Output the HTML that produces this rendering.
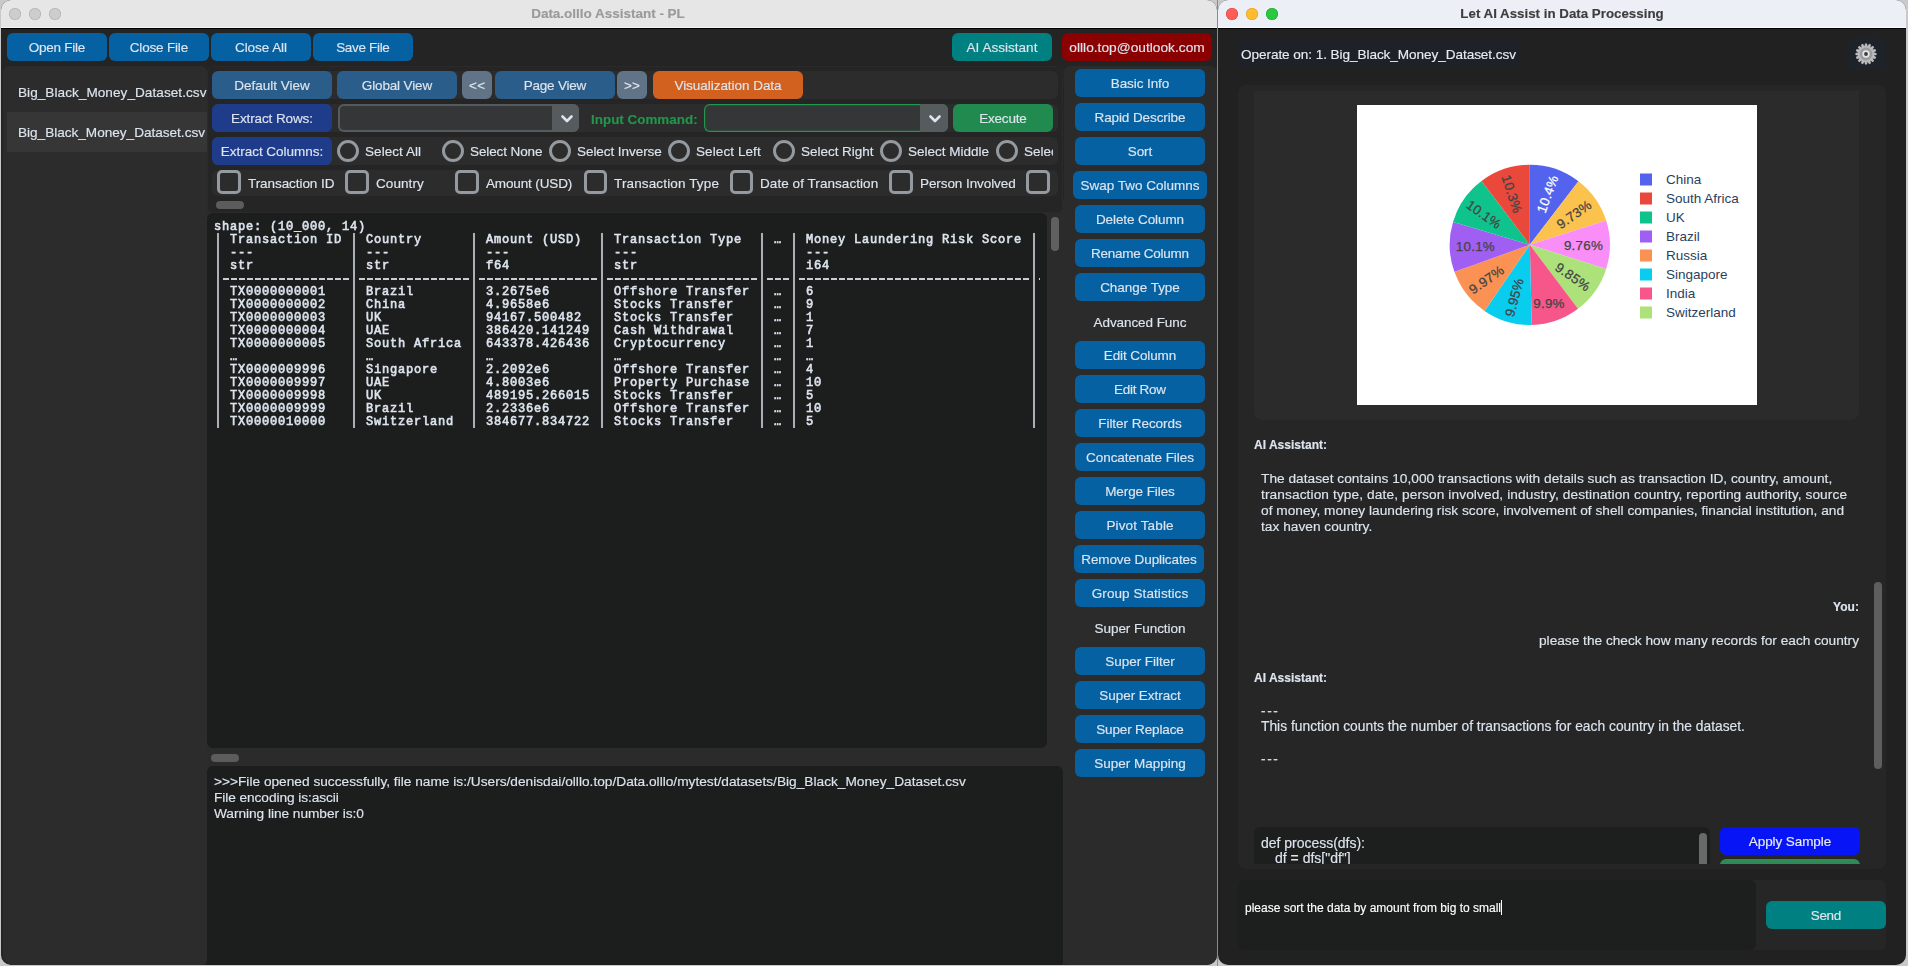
<!DOCTYPE html>
<html><head><meta charset="utf-8"><style>
html,body{margin:0;padding:0;}
body{width:1908px;height:966px;position:relative;overflow:hidden;background:#c9c9c9;font-family:"Liberation Sans",sans-serif;}
body div, body svg{position:absolute;white-space:pre;}
body{-webkit-font-smoothing:antialiased;}
.g{will-change:transform;}
</style></head><body>
<div style="left:1px;top:0;width:1216px;height:965px;background:#242424;border-radius:10px;overflow:hidden">
<div style="left:0px;top:0px;width:1216px;height:28px;background:#e6e6e6;border-radius:0px;"></div>
<div style="left:0px;top:27px;width:1216px;height:1px;background:#f4f4f4;border-radius:0px;"></div>
<div style="left:0px;top:28px;width:1216px;height:1px;background:#000;border-radius:0px;"></div>
<div style="left:8px;top:8px;width:12px;height:12px;background:#cdcdcd;border-radius:6px;box-shadow:inset 0 0 0 0.8px #b4b4b4"></div>
<div style="left:28px;top:8px;width:12px;height:12px;background:#cdcdcd;border-radius:6px;box-shadow:inset 0 0 0 0.8px #b4b4b4"></div>
<div style="left:48px;top:8px;width:12px;height:12px;background:#cdcdcd;border-radius:6px;box-shadow:inset 0 0 0 0.8px #b4b4b4"></div>
<div class="g" style="left:207px;top:4.4px;width:800px;height:20px;line-height:20px;text-align:center;font-family:'Liberation Sans';font-size:13.5px;font-weight:700;color:#9a9a9a;-webkit-text-stroke:0.15px #9a9a9a;"><span style="letter-spacing:-0.014px;margin-right:0.014px">Data.olllo Assistant - PL</span></div>
</div>
<div style="left:7px;top:33px;width:100px;height:28px;background:#0561a2;border-radius:6px;"></div>
<div class="g" style="left:-343.0px;top:38.2px;width:800px;height:20px;line-height:20px;text-align:center;font-family:'Liberation Sans';font-size:13.5px;font-weight:400;color:#dce4ee;-webkit-text-stroke:0.15px #dce4ee;"><span style="letter-spacing:-0.241px;margin-right:0.241px">Open File</span></div>
<div style="left:109px;top:33px;width:100px;height:28px;background:#0561a2;border-radius:6px;"></div>
<div class="g" style="left:-241.0px;top:38.2px;width:800px;height:20px;line-height:20px;text-align:center;font-family:'Liberation Sans';font-size:13.5px;font-weight:400;color:#dce4ee;-webkit-text-stroke:0.15px #dce4ee;"><span style="letter-spacing:-0.181px;margin-right:0.181px">Close File</span></div>
<div style="left:211px;top:33px;width:100px;height:28px;background:#0561a2;border-radius:6px;"></div>
<div class="g" style="left:-139.0px;top:38.2px;width:800px;height:20px;line-height:20px;text-align:center;font-family:'Liberation Sans';font-size:13.5px;font-weight:400;color:#dce4ee;-webkit-text-stroke:0.15px #dce4ee;"><span style="letter-spacing:-0.054px;margin-right:0.054px">Close All</span></div>
<div style="left:313px;top:33px;width:100px;height:28px;background:#0561a2;border-radius:6px;"></div>
<div class="g" style="left:-37.0px;top:38.2px;width:800px;height:20px;line-height:20px;text-align:center;font-family:'Liberation Sans';font-size:13.5px;font-weight:400;color:#dce4ee;-webkit-text-stroke:0.15px #dce4ee;"><span style="letter-spacing:-0.335px;margin-right:0.335px">Save File</span></div>
<div style="left:952px;top:33px;width:100px;height:28px;background:#008080;border-radius:6px;"></div>
<div class="g" style="left:602.0px;top:38.2px;width:800px;height:20px;line-height:20px;text-align:center;font-family:'Liberation Sans';font-size:13.5px;font-weight:400;color:#dce4ee;-webkit-text-stroke:0.15px #dce4ee;"><span style="letter-spacing:0.023px;margin-right:-0.023px">AI Assistant</span></div>
<div style="left:1062px;top:33px;width:150px;height:28px;background:#8b0000;border-radius:6px;"></div>
<div class="g" style="left:737.0px;top:38.2px;width:800px;height:20px;line-height:20px;text-align:center;font-family:'Liberation Sans';font-size:13.7px;font-weight:400;color:#dce4ee;-webkit-text-stroke:0.15px #dce4ee;"><span style="letter-spacing:0.026px;margin-right:-0.026px">olllo.top@outlook.com</span></div>
<div style="left:3px;top:66px;width:204px;height:899px;background:#2c2c2c;border-radius:6px;border-bottom-left-radius:10px"></div>
<div class="g" style="left:18px;top:83.2px;width:188.6px;overflow:hidden;height:20px;line-height:20px;font-family:'Liberation Sans';font-size:13.6px;font-weight:400;color:#dce4ee;-webkit-text-stroke:0.15px #dce4ee;"><span style="letter-spacing:0.040px;margin-right:-0.040px">Big_Black_Money_Dataset.csv(</span></div>
<div style="left:7px;top:112px;width:200px;height:40px;background:#363636;border-radius:0px;"></div>
<div class="g" style="left:18px;top:123.19999999999999px;width:188px;overflow:hidden;height:20px;line-height:20px;font-family:'Liberation Sans';font-size:13.6px;font-weight:400;color:#dce4ee;-webkit-text-stroke:0.15px #dce4ee;"><span style="letter-spacing:-0.015px;margin-right:0.015px">Big_Black_Money_Dataset.csv</span></div>
<div style="left:207px;top:200px;width:858px;height:765px;background:#2b2b2b;border-radius:0px;"></div>
<div style="left:207px;top:66px;width:855.5px;height:147px;background:#252525;border-radius:6px;box-shadow:inset 0 0 0 1px #2a2a2a"></div>
<div style="left:212px;top:71px;width:845.5px;height:28px;background:#2c2c2c;border-radius:6px;"></div>
<div style="left:212px;top:104px;width:845.5px;height:28px;background:#2c2c2c;border-radius:6px;"></div>
<div style="left:212px;top:137px;width:845.5px;height:27.5px;background:#2c2c2c;border-radius:6px;"></div>
<div style="left:212px;top:169.5px;width:845.5px;height:26.5px;background:#2c2c2c;border-radius:6px;"></div>
<div style="left:212px;top:71px;width:120px;height:28px;background:#2a5d89;border-radius:6px;"></div>
<div class="g" style="left:-128.0px;top:76.2px;width:800px;height:20px;line-height:20px;text-align:center;font-family:'Liberation Sans';font-size:13.5px;font-weight:400;color:#dce4ee;-webkit-text-stroke:0.15px #dce4ee;"><span style="letter-spacing:-0.004px;margin-right:0.004px">Default View</span></div>
<div style="left:337px;top:71px;width:120px;height:28px;background:#2a5d89;border-radius:6px;"></div>
<div class="g" style="left:-3.0px;top:76.2px;width:800px;height:20px;line-height:20px;text-align:center;font-family:'Liberation Sans';font-size:13.5px;font-weight:400;color:#dce4ee;-webkit-text-stroke:0.15px #dce4ee;"><span style="letter-spacing:-0.140px;margin-right:0.140px">Global View</span></div>
<div style="left:462px;top:71px;width:30px;height:28px;background:#617386;border-radius:6px;"></div>
<div class="g" style="left:77.0px;top:76.2px;width:800px;height:20px;line-height:20px;text-align:center;font-family:'Liberation Sans';font-size:13.5px;font-weight:400;color:#dce4ee;-webkit-text-stroke:0.15px #dce4ee;"><span style="letter-spacing:0.319px;margin-right:-0.319px">&lt;&lt;</span></div>
<div style="left:495px;top:71px;width:120px;height:28px;background:#2a5d89;border-radius:6px;"></div>
<div class="g" style="left:155.0px;top:76.2px;width:800px;height:20px;line-height:20px;text-align:center;font-family:'Liberation Sans';font-size:13.5px;font-weight:400;color:#dce4ee;-webkit-text-stroke:0.15px #dce4ee;"><span style="letter-spacing:-0.237px;margin-right:0.237px">Page View</span></div>
<div style="left:617px;top:71px;width:30px;height:28px;background:#617386;border-radius:6px;"></div>
<div class="g" style="left:232.0px;top:76.2px;width:800px;height:20px;line-height:20px;text-align:center;font-family:'Liberation Sans';font-size:13.5px;font-weight:400;color:#dce4ee;-webkit-text-stroke:0.15px #dce4ee;"><span style="letter-spacing:0.019px;margin-right:-0.019px">&gt;&gt;</span></div>
<div style="left:653px;top:71px;width:150px;height:28px;background:#d2601f;border-radius:6px;"></div>
<div class="g" style="left:328.0px;top:76.2px;width:800px;height:20px;line-height:20px;text-align:center;font-family:'Liberation Sans';font-size:13.5px;font-weight:400;color:#dce4ee;-webkit-text-stroke:0.15px #dce4ee;"><span style="letter-spacing:-0.037px;margin-right:0.037px">Visualization Data</span></div>
<div style="left:212px;top:104px;width:120px;height:28px;background:#1f3c8a;border-radius:6px;"></div>
<div class="g" style="left:-128.0px;top:109.2px;width:800px;height:20px;line-height:20px;text-align:center;font-family:'Liberation Sans';font-size:13.5px;font-weight:400;color:#dce4ee;-webkit-text-stroke:0.15px #dce4ee;"><span style="letter-spacing:-0.107px;margin-right:0.107px">Extract Rows:</span></div>
<div style="left:338px;top:104px;width:241px;height:28px;background:#343638;border-radius:6px;box-shadow:inset 0 0 0 2px #565b5e"></div>
<div style="left:552px;top:104px;width:27px;height:28px;background:#565b5e;border-radius:0px;border-radius:0 6px 6px 0"></div>
<svg style="left:559.8px;top:112.9px;width:14px;height:12px" viewBox="0 0 14 12"><path d="M2.5 3.5 L7 8 L11.5 3.5" stroke="#dce4ee" stroke-width="2.6" fill="none" stroke-linecap="round" stroke-linejoin="round"/></svg>
<div class="g" style="left:591px;top:110.2px;height:20px;line-height:20px;font-family:'Liberation Sans';font-size:13.4px;font-weight:700;color:#22964c;-webkit-text-stroke:0.15px #22964c;"><span style="letter-spacing:0.017px;margin-right:-0.017px">Input Command:</span></div>
<div style="left:704px;top:104px;width:244px;height:28px;background:#343638;border-radius:6px;box-shadow:inset 0 0 0 1.2px #22964c"></div>
<div style="left:920px;top:104px;width:28px;height:28px;background:#565b5e;border-radius:0px;border-radius:0 6px 6px 0"></div>
<svg style="left:927.8px;top:112.9px;width:14px;height:12px" viewBox="0 0 14 12"><path d="M2.5 3.5 L7 8 L11.5 3.5" stroke="#dce4ee" stroke-width="2.6" fill="none" stroke-linecap="round" stroke-linejoin="round"/></svg>
<div style="left:953px;top:104px;width:100px;height:28px;background:#218a4f;border-radius:6px;"></div>
<div class="g" style="left:603.0px;top:109.2px;width:800px;height:20px;line-height:20px;text-align:center;font-family:'Liberation Sans';font-size:13.5px;font-weight:400;color:#dce4ee;-webkit-text-stroke:0.15px #dce4ee;"><span style="letter-spacing:-0.180px;margin-right:0.180px">Execute</span></div>
<div style="left:212px;top:137px;width:120px;height:28px;background:#1f3c8a;border-radius:6px;"></div>
<div class="g" style="left:-128.0px;top:142.2px;width:800px;height:20px;line-height:20px;text-align:center;font-family:'Liberation Sans';font-size:13.5px;font-weight:400;color:#dce4ee;-webkit-text-stroke:0.15px #dce4ee;"><span style="letter-spacing:-0.025px;margin-right:0.025px">Extract Columns:</span></div>
<div style="left:212px;top:137px;width:841px;height:28px;overflow:hidden">
<div style="left:125px;top:3px;width:22px;height:22px;background:transparent;border-radius:11px;box-sizing:border-box;border:3px solid #949a9f"></div>
<div class="g" style="left:153px;top:5.199999999999999px;height:20px;line-height:20px;font-family:'Liberation Sans';font-size:13.5px;font-weight:400;color:#dce4ee;-webkit-text-stroke:0.15px #dce4ee;"><span style="letter-spacing:0.063px;margin-right:-0.063px">Select All</span></div>
<div style="left:230px;top:3px;width:22px;height:22px;background:transparent;border-radius:11px;box-sizing:border-box;border:3px solid #949a9f"></div>
<div class="g" style="left:258px;top:5.199999999999999px;height:20px;line-height:20px;font-family:'Liberation Sans';font-size:13.5px;font-weight:400;color:#dce4ee;-webkit-text-stroke:0.15px #dce4ee;"><span style="letter-spacing:-0.105px;margin-right:0.105px">Select None</span></div>
<div style="left:337px;top:3px;width:22px;height:22px;background:transparent;border-radius:11px;box-sizing:border-box;border:3px solid #949a9f"></div>
<div class="g" style="left:365px;top:5.199999999999999px;height:20px;line-height:20px;font-family:'Liberation Sans';font-size:13.5px;font-weight:400;color:#dce4ee;-webkit-text-stroke:0.15px #dce4ee;"><span style="letter-spacing:-0.057px;margin-right:0.057px">Select Inverse</span></div>
<div style="left:456px;top:3px;width:22px;height:22px;background:transparent;border-radius:11px;box-sizing:border-box;border:3px solid #949a9f"></div>
<div class="g" style="left:484px;top:5.199999999999999px;height:20px;line-height:20px;font-family:'Liberation Sans';font-size:13.5px;font-weight:400;color:#dce4ee;-webkit-text-stroke:0.15px #dce4ee;"><span style="letter-spacing:0.090px;margin-right:-0.090px">Select Left</span></div>
<div style="left:561px;top:3px;width:22px;height:22px;background:transparent;border-radius:11px;box-sizing:border-box;border:3px solid #949a9f"></div>
<div class="g" style="left:589px;top:5.199999999999999px;height:20px;line-height:20px;font-family:'Liberation Sans';font-size:13.5px;font-weight:400;color:#dce4ee;-webkit-text-stroke:0.15px #dce4ee;"><span style="letter-spacing:-0.027px;margin-right:0.027px">Select Right</span></div>
<div style="left:668px;top:3px;width:22px;height:22px;background:transparent;border-radius:11px;box-sizing:border-box;border:3px solid #949a9f"></div>
<div class="g" style="left:696px;top:5.199999999999999px;height:20px;line-height:20px;font-family:'Liberation Sans';font-size:13.5px;font-weight:400;color:#dce4ee;-webkit-text-stroke:0.15px #dce4ee;"><span style="letter-spacing:0.004px;margin-right:-0.004px">Select Middle</span></div>
<div style="left:784px;top:3px;width:22px;height:22px;background:transparent;border-radius:11px;box-sizing:border-box;border:3px solid #949a9f"></div>
<div class="g" style="left:812px;top:5.199999999999999px;height:20px;line-height:20px;font-family:'Liberation Sans';font-size:13.5px;font-weight:400;color:#dce4ee;-webkit-text-stroke:0.15px #dce4ee;">Select Invert</div>
</div>
<div style="left:217.1px;top:170.2px;width:23.6px;height:23.6px;background:transparent;border-radius:5px;box-sizing:border-box;border:3px solid #949a9f"></div>
<div class="g" style="left:247.6px;top:174.2px;height:20px;line-height:20px;font-family:'Liberation Sans';font-size:13.5px;font-weight:400;color:#dce4ee;-webkit-text-stroke:0.15px #dce4ee;"><span style="letter-spacing:-0.069px;margin-right:0.069px">Transaction ID</span></div>
<div style="left:345.1px;top:170.2px;width:23.6px;height:23.6px;background:transparent;border-radius:5px;box-sizing:border-box;border:3px solid #949a9f"></div>
<div class="g" style="left:375.6px;top:174.2px;height:20px;line-height:20px;font-family:'Liberation Sans';font-size:13.5px;font-weight:400;color:#dce4ee;-webkit-text-stroke:0.15px #dce4ee;"><span style="letter-spacing:0.086px;margin-right:-0.086px">Country</span></div>
<div style="left:455.3px;top:170.2px;width:23.6px;height:23.6px;background:transparent;border-radius:5px;box-sizing:border-box;border:3px solid #949a9f"></div>
<div class="g" style="left:485.8px;top:174.2px;height:20px;line-height:20px;font-family:'Liberation Sans';font-size:13.5px;font-weight:400;color:#dce4ee;-webkit-text-stroke:0.15px #dce4ee;"><span style="letter-spacing:-0.135px;margin-right:0.135px">Amount (USD)</span></div>
<div style="left:583.6px;top:170.2px;width:23.6px;height:23.6px;background:transparent;border-radius:5px;box-sizing:border-box;border:3px solid #949a9f"></div>
<div class="g" style="left:614.1px;top:174.2px;height:20px;line-height:20px;font-family:'Liberation Sans';font-size:13.5px;font-weight:400;color:#dce4ee;-webkit-text-stroke:0.15px #dce4ee;"><span style="letter-spacing:0.139px;margin-right:-0.139px">Transaction Type</span></div>
<div style="left:729.6px;top:170.2px;width:23.6px;height:23.6px;background:transparent;border-radius:5px;box-sizing:border-box;border:3px solid #949a9f"></div>
<div class="g" style="left:760.1px;top:174.2px;height:20px;line-height:20px;font-family:'Liberation Sans';font-size:13.5px;font-weight:400;color:#dce4ee;-webkit-text-stroke:0.15px #dce4ee;"><span style="letter-spacing:0.062px;margin-right:-0.062px">Date of Transaction</span></div>
<div style="left:889.3px;top:170.2px;width:23.6px;height:23.6px;background:transparent;border-radius:5px;box-sizing:border-box;border:3px solid #949a9f"></div>
<div class="g" style="left:919.8px;top:174.2px;height:20px;line-height:20px;font-family:'Liberation Sans';font-size:13.5px;font-weight:400;color:#dce4ee;-webkit-text-stroke:0.15px #dce4ee;"><span style="letter-spacing:-0.079px;margin-right:0.079px">Person Involved</span></div>
<div style="left:1026.3px;top:170.2px;width:23.6px;height:23.6px;background:transparent;border-radius:5px;box-sizing:border-box;border:3px solid #949a9f"></div>
<div style="left:216px;top:201px;width:28px;height:8px;background:#5c5c5c;border-radius:4px;"></div>
<div style="left:207px;top:213px;width:840px;height:535px;background:#1c1d1d;border-radius:6px;"></div>
<div style="left:1051px;top:217px;width:8px;height:34px;background:#606060;border-radius:4px;"></div>
<div style="left:207px;top:213px;width:833px;height:535px;overflow:hidden">
<div class="g" style="left:7.400000000000006px;top:8.400000000000006px;height:13px;line-height:13px;font-family:'Liberation Mono';font-size:12px;letter-spacing:0.8px;font-weight:400;-webkit-text-stroke:0.6px #dce4ee;color:#dce4ee;white-space:pre">shape: (10_000, 14)</div>
<div class="g" style="left:7.400000000000006px;top:21.400000000000006px;height:13px;line-height:13px;font-family:'Liberation Mono';font-size:12px;letter-spacing:0.8px;font-weight:400;-webkit-text-stroke:0.6px #dce4ee;color:#dce4ee;white-space:pre">  Transaction ID   Country        Amount (USD)    Transaction Type    …   Money Laundering Risk Score</div>
<div class="g" style="left:7.400000000000006px;top:34.400000000000006px;height:13px;line-height:13px;font-family:'Liberation Mono';font-size:12px;letter-spacing:0.8px;font-weight:400;-webkit-text-stroke:0.6px #dce4ee;color:#dce4ee;white-space:pre">  ---              ---            ---             ---                     ---</div>
<div class="g" style="left:7.400000000000006px;top:47.39999999999998px;height:13px;line-height:13px;font-family:'Liberation Mono';font-size:12px;letter-spacing:0.8px;font-weight:400;-webkit-text-stroke:0.6px #dce4ee;color:#dce4ee;white-space:pre">  str              str            f64             str                     i64</div>
<div style="left:16px;top:65.44999999999999px;width:128px;height:1.5px;background:repeating-linear-gradient(90deg,#c9ced4 0 6.3px,transparent 6.3px 8px)"></div>
<div style="left:152px;top:65.44999999999999px;width:112px;height:1.5px;background:repeating-linear-gradient(90deg,#c9ced4 0 6.3px,transparent 6.3px 8px)"></div>
<div style="left:272px;top:65.44999999999999px;width:120px;height:1.5px;background:repeating-linear-gradient(90deg,#c9ced4 0 6.3px,transparent 6.3px 8px)"></div>
<div style="left:400px;top:65.44999999999999px;width:152px;height:1.5px;background:repeating-linear-gradient(90deg,#c9ced4 0 6.3px,transparent 6.3px 8px)"></div>
<div style="left:560px;top:65.44999999999999px;width:24px;height:1.5px;background:repeating-linear-gradient(90deg,#c9ced4 0 6.3px,transparent 6.3px 8px)"></div>
<div style="left:592px;top:65.44999999999999px;width:232px;height:1.5px;background:repeating-linear-gradient(90deg,#c9ced4 0 6.3px,transparent 6.3px 8px)"></div>
<div style="left:832px;top:65.44999999999999px;width:16px;height:1.5px;background:repeating-linear-gradient(90deg,#c9ced4 0 6.3px,transparent 6.3px 8px)"></div>
<div class="g" style="left:7.400000000000006px;top:73.39999999999998px;height:13px;line-height:13px;font-family:'Liberation Mono';font-size:12px;letter-spacing:0.8px;font-weight:400;-webkit-text-stroke:0.6px #dce4ee;color:#dce4ee;white-space:pre">  TX0000000001     Brazil         3.2675e6        Offshore Transfer   …   6</div>
<div class="g" style="left:7.400000000000006px;top:86.39999999999998px;height:13px;line-height:13px;font-family:'Liberation Mono';font-size:12px;letter-spacing:0.8px;font-weight:400;-webkit-text-stroke:0.6px #dce4ee;color:#dce4ee;white-space:pre">  TX0000000002     China          4.9658e6        Stocks Transfer     …   9</div>
<div class="g" style="left:7.400000000000006px;top:99.39999999999998px;height:13px;line-height:13px;font-family:'Liberation Mono';font-size:12px;letter-spacing:0.8px;font-weight:400;-webkit-text-stroke:0.6px #dce4ee;color:#dce4ee;white-space:pre">  TX0000000003     UK             94167.500482    Stocks Transfer     …   1</div>
<div class="g" style="left:7.400000000000006px;top:112.39999999999998px;height:13px;line-height:13px;font-family:'Liberation Mono';font-size:12px;letter-spacing:0.8px;font-weight:400;-webkit-text-stroke:0.6px #dce4ee;color:#dce4ee;white-space:pre">  TX0000000004     UAE            386420.141249   Cash Withdrawal     …   7</div>
<div class="g" style="left:7.400000000000006px;top:125.39999999999998px;height:13px;line-height:13px;font-family:'Liberation Mono';font-size:12px;letter-spacing:0.8px;font-weight:400;-webkit-text-stroke:0.6px #dce4ee;color:#dce4ee;white-space:pre">  TX0000000005     South Africa   643378.426436   Cryptocurrency      …   1</div>
<div class="g" style="left:7.400000000000006px;top:138.39999999999998px;height:13px;line-height:13px;font-family:'Liberation Mono';font-size:12px;letter-spacing:0.8px;font-weight:400;-webkit-text-stroke:0.6px #dce4ee;color:#dce4ee;white-space:pre">  …                …              …               …                   …   …</div>
<div class="g" style="left:7.400000000000006px;top:151.39999999999998px;height:13px;line-height:13px;font-family:'Liberation Mono';font-size:12px;letter-spacing:0.8px;font-weight:400;-webkit-text-stroke:0.6px #dce4ee;color:#dce4ee;white-space:pre">  TX0000009996     Singapore      2.2092e6        Offshore Transfer   …   4</div>
<div class="g" style="left:7.400000000000006px;top:164.39999999999998px;height:13px;line-height:13px;font-family:'Liberation Mono';font-size:12px;letter-spacing:0.8px;font-weight:400;-webkit-text-stroke:0.6px #dce4ee;color:#dce4ee;white-space:pre">  TX0000009997     UAE            4.8003e6        Property Purchase   …   10</div>
<div class="g" style="left:7.400000000000006px;top:177.39999999999998px;height:13px;line-height:13px;font-family:'Liberation Mono';font-size:12px;letter-spacing:0.8px;font-weight:400;-webkit-text-stroke:0.6px #dce4ee;color:#dce4ee;white-space:pre">  TX0000009998     UK             489195.266015   Stocks Transfer     …   5</div>
<div class="g" style="left:7.400000000000006px;top:190.39999999999998px;height:13px;line-height:13px;font-family:'Liberation Mono';font-size:12px;letter-spacing:0.8px;font-weight:400;-webkit-text-stroke:0.6px #dce4ee;color:#dce4ee;white-space:pre">  TX0000009999     Brazil         2.2336e6        Offshore Transfer   …   10</div>
<div class="g" style="left:7.400000000000006px;top:203.39999999999998px;height:13px;line-height:13px;font-family:'Liberation Mono';font-size:12px;letter-spacing:0.8px;font-weight:400;-webkit-text-stroke:0.6px #dce4ee;color:#dce4ee;white-space:pre">  TX0000010000     Switzerland    384677.834722   Stocks Transfer     …   5</div>
<div style="left:10.150000000000006px;top:20px;width:1.5px;height:195px;background:#aab0b8"></div>
<div style="left:146.14999999999998px;top:20px;width:1.5px;height:195px;background:#aab0b8"></div>
<div style="left:266.15px;top:20px;width:1.5px;height:195px;background:#aab0b8"></div>
<div style="left:394.15px;top:20px;width:1.5px;height:195px;background:#aab0b8"></div>
<div style="left:554.15px;top:20px;width:1.5px;height:195px;background:#aab0b8"></div>
<div style="left:586.15px;top:20px;width:1.5px;height:195px;background:#aab0b8"></div>
<div style="left:826.1500000000001px;top:20px;width:1.5px;height:195px;background:#aab0b8"></div>
</div>
<div style="left:211px;top:754px;width:28px;height:8px;background:#5c5c5c;border-radius:4px;"></div>
<div style="left:207px;top:766px;width:856px;height:199px;background:#1c1d1d;border-radius:6px;border-bottom-left-radius:0;border-bottom-right-radius:0"></div>
<div class="g" style="left:214px;top:772.2px;height:20px;line-height:20px;font-family:'Liberation Sans';font-size:13.7px;font-weight:400;color:#dce4ee;-webkit-text-stroke:0.15px #dce4ee;"><span style="letter-spacing:0.006px;margin-right:-0.006px">&gt;&gt;&gt;File opened successfully, file name is:/Users/denisdai/olllo.top/Data.olllo/mytest/datasets/Big_Black_Money_Dataset.csv</span></div>
<div class="g" style="left:214px;top:788.2px;height:20px;line-height:20px;font-family:'Liberation Sans';font-size:13.7px;font-weight:400;color:#dce4ee;-webkit-text-stroke:0.15px #dce4ee;"><span style="letter-spacing:-0.071px;margin-right:0.071px">File encoding is:ascii</span></div>
<div class="g" style="left:214px;top:804.2px;height:20px;line-height:20px;font-family:'Liberation Sans';font-size:13.7px;font-weight:400;color:#dce4ee;-webkit-text-stroke:0.15px #dce4ee;"><span style="letter-spacing:-0.039px;margin-right:0.039px">Warning line number is:0</span></div>
<div style="left:1063.5px;top:66px;width:153.5px;height:899px;background:#2b2b2b;border-radius:6px;border-bottom-right-radius:10px"></div>
<div style="left:1075px;top:69px;width:130px;height:28px;background:#0561a2;border-radius:6px;"></div>
<div class="g" style="left:740.0px;top:74.2px;width:800px;height:20px;line-height:20px;text-align:center;font-family:'Liberation Sans';font-size:13.5px;font-weight:400;color:#dce4ee;-webkit-text-stroke:0.15px #dce4ee;"><span style="letter-spacing:-0.076px;margin-right:0.076px">Basic Info</span></div>
<div style="left:1075px;top:103px;width:130px;height:28px;background:#0561a2;border-radius:6px;"></div>
<div class="g" style="left:740.0px;top:108.2px;width:800px;height:20px;line-height:20px;text-align:center;font-family:'Liberation Sans';font-size:13.5px;font-weight:400;color:#dce4ee;-webkit-text-stroke:0.15px #dce4ee;"><span style="letter-spacing:-0.100px;margin-right:0.100px">Rapid Describe</span></div>
<div style="left:1075px;top:137px;width:130px;height:28px;background:#0561a2;border-radius:6px;"></div>
<div class="g" style="left:740.0px;top:142.2px;width:800px;height:20px;line-height:20px;text-align:center;font-family:'Liberation Sans';font-size:13.5px;font-weight:400;color:#dce4ee;-webkit-text-stroke:0.15px #dce4ee;"><span style="letter-spacing:-0.155px;margin-right:0.155px">Sort</span></div>
<div style="left:1073px;top:171px;width:134px;height:28px;background:#0561a2;border-radius:6px;"></div>
<div class="g" style="left:740.0px;top:176.2px;width:800px;height:20px;line-height:20px;text-align:center;font-family:'Liberation Sans';font-size:13.5px;font-weight:400;color:#dce4ee;-webkit-text-stroke:0.15px #dce4ee;"><span style="letter-spacing:-0.018px;margin-right:0.018px">Swap Two Columns</span></div>
<div style="left:1075px;top:205px;width:130px;height:28px;background:#0561a2;border-radius:6px;"></div>
<div class="g" style="left:740.0px;top:210.2px;width:800px;height:20px;line-height:20px;text-align:center;font-family:'Liberation Sans';font-size:13.5px;font-weight:400;color:#dce4ee;-webkit-text-stroke:0.15px #dce4ee;"><span style="letter-spacing:-0.100px;margin-right:0.100px">Delete Column</span></div>
<div style="left:1075px;top:239px;width:130px;height:28px;background:#0561a2;border-radius:6px;"></div>
<div class="g" style="left:740.0px;top:244.2px;width:800px;height:20px;line-height:20px;text-align:center;font-family:'Liberation Sans';font-size:13.5px;font-weight:400;color:#dce4ee;-webkit-text-stroke:0.15px #dce4ee;"><span style="letter-spacing:-0.275px;margin-right:0.275px">Rename Column</span></div>
<div style="left:1075px;top:273px;width:130px;height:28px;background:#0561a2;border-radius:6px;"></div>
<div class="g" style="left:740.0px;top:278.2px;width:800px;height:20px;line-height:20px;text-align:center;font-family:'Liberation Sans';font-size:13.5px;font-weight:400;color:#dce4ee;-webkit-text-stroke:0.15px #dce4ee;"><span style="letter-spacing:-0.038px;margin-right:0.038px">Change Type</span></div>
<div class="g" style="left:740px;top:313.2px;width:800px;height:20px;line-height:20px;text-align:center;font-family:'Liberation Sans';font-size:13.5px;font-weight:400;color:#dce4ee;-webkit-text-stroke:0.15px #dce4ee;"><span style="letter-spacing:-0.084px;margin-right:0.084px">Advanced Func</span></div>
<div style="left:1075px;top:341px;width:130px;height:28px;background:#0561a2;border-radius:6px;"></div>
<div class="g" style="left:740.0px;top:346.2px;width:800px;height:20px;line-height:20px;text-align:center;font-family:'Liberation Sans';font-size:13.5px;font-weight:400;color:#dce4ee;-webkit-text-stroke:0.15px #dce4ee;"><span style="letter-spacing:-0.105px;margin-right:0.105px">Edit Column</span></div>
<div style="left:1075px;top:375px;width:130px;height:28px;background:#0561a2;border-radius:6px;"></div>
<div class="g" style="left:740.0px;top:380.2px;width:800px;height:20px;line-height:20px;text-align:center;font-family:'Liberation Sans';font-size:13.5px;font-weight:400;color:#dce4ee;-webkit-text-stroke:0.15px #dce4ee;"><span style="letter-spacing:-0.262px;margin-right:0.262px">Edit Row</span></div>
<div style="left:1075px;top:409px;width:130px;height:28px;background:#0561a2;border-radius:6px;"></div>
<div class="g" style="left:740.0px;top:414.2px;width:800px;height:20px;line-height:20px;text-align:center;font-family:'Liberation Sans';font-size:13.5px;font-weight:400;color:#dce4ee;-webkit-text-stroke:0.15px #dce4ee;"><span style="letter-spacing:-0.041px;margin-right:0.041px">Filter Records</span></div>
<div style="left:1075px;top:443px;width:130px;height:28px;background:#0561a2;border-radius:6px;"></div>
<div class="g" style="left:740.0px;top:448.2px;width:800px;height:20px;line-height:20px;text-align:center;font-family:'Liberation Sans';font-size:13.5px;font-weight:400;color:#dce4ee;-webkit-text-stroke:0.15px #dce4ee;"><span style="letter-spacing:-0.063px;margin-right:0.063px">Concatenate Files</span></div>
<div style="left:1075px;top:477px;width:130px;height:28px;background:#0561a2;border-radius:6px;"></div>
<div class="g" style="left:740.0px;top:482.2px;width:800px;height:20px;line-height:20px;text-align:center;font-family:'Liberation Sans';font-size:13.5px;font-weight:400;color:#dce4ee;-webkit-text-stroke:0.15px #dce4ee;"><span style="letter-spacing:-0.093px;margin-right:0.093px">Merge Files</span></div>
<div style="left:1075px;top:511px;width:130px;height:28px;background:#0561a2;border-radius:6px;"></div>
<div class="g" style="left:740.0px;top:516.2px;width:800px;height:20px;line-height:20px;text-align:center;font-family:'Liberation Sans';font-size:13.5px;font-weight:400;color:#dce4ee;-webkit-text-stroke:0.15px #dce4ee;"><span style="letter-spacing:0.130px;margin-right:-0.130px">Pivot Table</span></div>
<div style="left:1074px;top:545px;width:130px;height:28px;background:#0561a2;border-radius:6px;"></div>
<div class="g" style="left:739.0px;top:550.2px;width:800px;height:20px;line-height:20px;text-align:center;font-family:'Liberation Sans';font-size:13.5px;font-weight:400;color:#dce4ee;-webkit-text-stroke:0.15px #dce4ee;"><span style="letter-spacing:-0.098px;margin-right:0.098px">Remove Duplicates</span></div>
<div style="left:1075px;top:579px;width:130px;height:28px;background:#0561a2;border-radius:6px;"></div>
<div class="g" style="left:740.0px;top:584.2px;width:800px;height:20px;line-height:20px;text-align:center;font-family:'Liberation Sans';font-size:13.5px;font-weight:400;color:#dce4ee;-webkit-text-stroke:0.15px #dce4ee;"><span style="letter-spacing:0.074px;margin-right:-0.074px">Group Statistics</span></div>
<div class="g" style="left:740px;top:619.2px;width:800px;height:20px;line-height:20px;text-align:center;font-family:'Liberation Sans';font-size:13.5px;font-weight:400;color:#dce4ee;-webkit-text-stroke:0.15px #dce4ee;"><span style="letter-spacing:-0.043px;margin-right:0.043px">Super Function</span></div>
<div style="left:1075px;top:647px;width:130px;height:28px;background:#0561a2;border-radius:6px;"></div>
<div class="g" style="left:740.0px;top:652.2px;width:800px;height:20px;line-height:20px;text-align:center;font-family:'Liberation Sans';font-size:13.5px;font-weight:400;color:#dce4ee;-webkit-text-stroke:0.15px #dce4ee;"><span style="letter-spacing:-0.026px;margin-right:0.026px">Super Filter</span></div>
<div style="left:1075px;top:681px;width:130px;height:28px;background:#0561a2;border-radius:6px;"></div>
<div class="g" style="left:740.0px;top:686.2px;width:800px;height:20px;line-height:20px;text-align:center;font-family:'Liberation Sans';font-size:13.5px;font-weight:400;color:#dce4ee;-webkit-text-stroke:0.15px #dce4ee;"><span style="letter-spacing:-0.033px;margin-right:0.033px">Super Extract</span></div>
<div style="left:1075px;top:715px;width:130px;height:28px;background:#0561a2;border-radius:6px;"></div>
<div class="g" style="left:740.0px;top:720.2px;width:800px;height:20px;line-height:20px;text-align:center;font-family:'Liberation Sans';font-size:13.5px;font-weight:400;color:#dce4ee;-webkit-text-stroke:0.15px #dce4ee;"><span style="letter-spacing:-0.151px;margin-right:0.151px">Super Replace</span></div>
<div style="left:1075px;top:749px;width:130px;height:28px;background:#0561a2;border-radius:6px;"></div>
<div class="g" style="left:740.0px;top:754.2px;width:800px;height:20px;line-height:20px;text-align:center;font-family:'Liberation Sans';font-size:13.5px;font-weight:400;color:#dce4ee;-webkit-text-stroke:0.15px #dce4ee;"><span style="letter-spacing:-0.014px;margin-right:0.014px">Super Mapping</span></div>
<div style="left:1217px;top:0px;width:1px;height:966px;background:#8a8a8a;border-radius:0px;"></div>
<div style="left:1218px;top:0;width:688px;height:965px;background:#212121;border-radius:10px;overflow:hidden">
<div style="left:0px;top:0px;width:688px;height:28px;background:#eceff5;border-radius:0px;"></div>
<div style="left:0px;top:27px;width:688px;height:1px;background:#fafbff;border-radius:0px;"></div>
<div style="left:0px;top:28px;width:688px;height:1px;background:#000;border-radius:0px;"></div>
<div style="left:8px;top:8px;width:12px;height:12px;background:#ff5f57;border-radius:6px;box-shadow:inset 0 0 0 0.6px #e0443e"></div>
<div style="left:28px;top:8px;width:12px;height:12px;background:#febc2e;border-radius:6px;box-shadow:inset 0 0 0 0.6px #dea123"></div>
<div style="left:48px;top:8px;width:12px;height:12px;background:#28c840;border-radius:6px;box-shadow:inset 0 0 0 0.6px #1aab29"></div>
<div class="g" style="left:-56px;top:4.4px;width:800px;height:20px;line-height:20px;text-align:center;font-family:'Liberation Sans';font-size:13.3px;font-weight:700;color:#3d3d3d;-webkit-text-stroke:0.15px #3d3d3d;"><span style="letter-spacing:0.011px;margin-right:-0.011px">Let AI Assist in Data Processing</span></div>
</div>
<div style="left:1238px;top:40px;width:282px;height:28px;background:#1e2228;border-radius:0px;"></div>
<div class="g" style="left:1241px;top:44.7px;height:20px;line-height:20px;font-family:'Liberation Sans';font-size:13.6px;font-weight:400;color:#e8ebee;-webkit-text-stroke:0.15px #e8ebee;"><span style="letter-spacing:-0.075px;margin-right:0.075px">Operate on: 1. Big_Black_Money_Dataset.csv</span></div>
<div style="left:1846.5px;top:38px;width:39.5px;height:32px;background:#1e232a;border-radius:8px;"></div>
<svg style="left:1852.6px;top:41.1px;width:26px;height:26px" viewBox="1852.6 41.1 26 26"><polygon points="1864.06,46.35 1864.56,43.55 1866.64,43.55 1867.14,46.35 1867.14,46.35 1868.68,43.96 1870.60,44.75 1869.99,47.53 1869.99,47.53 1872.32,45.91 1873.79,47.38 1872.17,49.71 1872.17,49.71 1874.95,49.10 1875.74,51.02 1873.35,52.56 1873.35,52.56 1876.15,53.06 1876.15,55.14 1873.35,55.64 1873.35,55.64 1875.74,57.18 1874.95,59.10 1872.17,58.49 1872.17,58.49 1873.79,60.82 1872.32,62.29 1869.99,60.67 1869.99,60.67 1870.60,63.45 1868.68,64.24 1867.14,61.85 1867.14,61.85 1866.64,64.65 1864.56,64.65 1864.06,61.85 1864.06,61.85 1862.52,64.24 1860.60,63.45 1861.21,60.67 1861.21,60.67 1858.88,62.29 1857.41,60.82 1859.03,58.49 1859.03,58.49 1856.25,59.10 1855.46,57.18 1857.85,55.64 1857.85,55.64 1855.05,55.14 1855.05,53.06 1857.85,52.56 1857.85,52.56 1855.46,51.02 1856.25,49.10 1859.03,49.71 1859.03,49.71 1857.41,47.38 1858.88,45.91 1861.21,47.53 1861.21,47.53 1860.60,44.75 1862.52,43.96 1864.06,46.35" fill="#b9bbbd"/><circle cx="1865.6" cy="54.1" r="6.4" fill="#9a9c9e"/><circle cx="1865.6" cy="54.1" r="3.7" fill="#e4e6e8"/><circle cx="1865.6" cy="54.1" r="1.9" fill="#3a3a3a"/></svg>
<div style="left:1238px;top:84.7px;width:648px;height:784.3px;background:#262626;border-radius:8px;"></div>
<div style="left:1254px;top:91px;width:605px;height:329px;background:#2b2b2b;border-radius:0px;border-radius:0 0 8px 8px"></div>
<div style="left:1357px;top:105px;width:400px;height:300px;background:#ffffff;border-radius:0px;"></div>
<svg style="left:1357px;top:105px;width:400px;height:300px" viewBox="1357 105 400 300"><path d="M1529.8,244.8 L1529.80,164.70 A80.1,80.1 0 0 1 1578.47,181.18 Z" fill="#5463ee" stroke="#fff" stroke-width="0"/><path d="M1529.8,244.8 L1578.47,181.18 A80.1,80.1 0 0 1 1606.16,220.61 Z" fill="#fbc24d" stroke="#fff" stroke-width="0"/><path d="M1529.8,244.8 L1606.16,220.61 A80.1,80.1 0 0 1 1606.18,268.94 Z" fill="#f98ef8" stroke="#fff" stroke-width="0"/><path d="M1529.8,244.8 L1606.18,268.94 A80.1,80.1 0 0 1 1578.03,308.75 Z" fill="#ade27a" stroke="#fff" stroke-width="0"/><path d="M1529.8,244.8 L1578.03,308.75 A80.1,80.1 0 0 1 1531.76,324.88 Z" fill="#f65689" stroke="#fff" stroke-width="0"/><path d="M1529.8,244.8 L1531.76,324.88 A80.1,80.1 0 0 1 1484.55,310.90 Z" fill="#08cdef" stroke="#fff" stroke-width="0"/><path d="M1529.8,244.8 L1484.55,310.90 A80.1,80.1 0 0 1 1454.40,271.85 Z" fill="#fb9253" stroke="#fff" stroke-width="0"/><path d="M1529.8,244.8 L1454.40,271.85 A80.1,80.1 0 0 1 1453.04,221.91 Z" fill="#a05ef3" stroke="#fff" stroke-width="0"/><path d="M1529.8,244.8 L1453.04,221.91 A80.1,80.1 0 0 1 1481.53,180.88 Z" fill="#0ec48c" stroke="#fff" stroke-width="0"/><path d="M1529.8,244.8 L1481.53,180.88 A80.1,80.1 0 0 1 1529.80,164.70 Z" fill="#e9483a" stroke="#fff" stroke-width="0"/><text x="1547.7" y="194.1" transform="rotate(-70 1547.7 194.1)" text-anchor="middle" dominant-baseline="central" font-family="Liberation Sans" font-size="13.4" letter-spacing="0.25" stroke="#fff" stroke-width="0.25" fill="#fff">10.4%</text><text x="1574.2" y="214.6" transform="rotate(-35 1574.2 214.6)" text-anchor="middle" dominant-baseline="central" font-family="Liberation Sans" font-size="13.4" letter-spacing="0.25" stroke="#444" stroke-width="0.25" fill="#444">9.73%</text><text x="1583.5" y="245.4" transform="rotate(0 1583.5 245.4)" text-anchor="middle" dominant-baseline="central" font-family="Liberation Sans" font-size="13.4" letter-spacing="0.25" stroke="#444" stroke-width="0.25" fill="#444">9.76%</text><text x="1572.7" y="277" transform="rotate(35 1572.7 277)" text-anchor="middle" dominant-baseline="central" font-family="Liberation Sans" font-size="13.4" letter-spacing="0.25" stroke="#444" stroke-width="0.25" fill="#444">9.85%</text><text x="1549" y="303.1" transform="rotate(0 1549 303.1)" text-anchor="middle" dominant-baseline="central" font-family="Liberation Sans" font-size="13.4" letter-spacing="0.25" stroke="#444" stroke-width="0.25" fill="#444">9.9%</text><text x="1514.5" y="297.5" transform="rotate(-75 1514.5 297.5)" text-anchor="middle" dominant-baseline="central" font-family="Liberation Sans" font-size="13.4" letter-spacing="0.25" stroke="#444" stroke-width="0.25" fill="#444">9.95%</text><text x="1486.6" y="279.8" transform="rotate(-35 1486.6 279.8)" text-anchor="middle" dominant-baseline="central" font-family="Liberation Sans" font-size="13.4" letter-spacing="0.25" stroke="#444" stroke-width="0.25" fill="#444">9.97%</text><text x="1475.4" y="246.3" transform="rotate(0 1475.4 246.3)" text-anchor="middle" dominant-baseline="central" font-family="Liberation Sans" font-size="13.4" letter-spacing="0.25" stroke="#444" stroke-width="0.25" fill="#444">10.1%</text><text x="1483.8" y="214.6" transform="rotate(35 1483.8 214.6)" text-anchor="middle" dominant-baseline="central" font-family="Liberation Sans" font-size="13.4" letter-spacing="0.25" stroke="#444" stroke-width="0.25" fill="#444">10.1%</text><text x="1511.7" y="194.1" transform="rotate(72 1511.7 194.1)" text-anchor="middle" dominant-baseline="central" font-family="Liberation Sans" font-size="13.4" letter-spacing="0.25" stroke="#444" stroke-width="0.25" fill="#444">10.3%</text><rect x="1640" y="173.5" width="12" height="12" fill="#5463ee"/><text x="1666" y="179.5" dominant-baseline="central" font-family="Liberation Sans" font-size="13.5" fill="#2a3f5f">China</text><rect x="1640" y="192.5" width="12" height="12" fill="#e9483a"/><text x="1666" y="198.5" dominant-baseline="central" font-family="Liberation Sans" font-size="13.5" fill="#2a3f5f">South Africa</text><rect x="1640" y="211.5" width="12" height="12" fill="#0ec48c"/><text x="1666" y="217.5" dominant-baseline="central" font-family="Liberation Sans" font-size="13.5" fill="#2a3f5f">UK</text><rect x="1640" y="230.5" width="12" height="12" fill="#a05ef3"/><text x="1666" y="236.5" dominant-baseline="central" font-family="Liberation Sans" font-size="13.5" fill="#2a3f5f">Brazil</text><rect x="1640" y="249.5" width="12" height="12" fill="#fb9253"/><text x="1666" y="255.5" dominant-baseline="central" font-family="Liberation Sans" font-size="13.5" fill="#2a3f5f">Russia</text><rect x="1640" y="268.5" width="12" height="12" fill="#08cdef"/><text x="1666" y="274.5" dominant-baseline="central" font-family="Liberation Sans" font-size="13.5" fill="#2a3f5f">Singapore</text><rect x="1640" y="287.5" width="12" height="12" fill="#f65689"/><text x="1666" y="293.5" dominant-baseline="central" font-family="Liberation Sans" font-size="13.5" fill="#2a3f5f">India</text><rect x="1640" y="306.5" width="12" height="12" fill="#ade27a"/><text x="1666" y="312.5" dominant-baseline="central" font-family="Liberation Sans" font-size="13.5" fill="#2a3f5f">Switzerland</text></svg>
<div class="g" style="left:1254px;top:435.2px;height:20px;line-height:20px;font-family:'Liberation Sans';font-size:12px;font-weight:700;color:#dce4ee;-webkit-text-stroke:0.15px #dce4ee;"><span style="letter-spacing:0.008px;margin-right:-0.008px">AI Assistant:</span></div>
<div class="g" style="left:1261px;top:469.2px;height:20px;line-height:20px;font-family:'Liberation Sans';font-size:13.7px;font-weight:400;color:#dce4ee;-webkit-text-stroke:0.15px #dce4ee;"><span style="letter-spacing:0.017px;margin-right:-0.017px">The dataset contains 10,000 transactions with details such as transaction ID, country, amount,</span></div>
<div class="g" style="left:1261px;top:485.2px;height:20px;line-height:20px;font-family:'Liberation Sans';font-size:13.7px;font-weight:400;color:#dce4ee;-webkit-text-stroke:0.15px #dce4ee;"><span style="letter-spacing:0.103px;margin-right:-0.103px">transaction type, date, person involved, industry, destination country, reporting authority, source</span></div>
<div class="g" style="left:1261px;top:501.2px;height:20px;line-height:20px;font-family:'Liberation Sans';font-size:13.7px;font-weight:400;color:#dce4ee;-webkit-text-stroke:0.15px #dce4ee;"><span style="letter-spacing:0.013px;margin-right:-0.013px">of money, money laundering risk score, involvement of shell companies, financial institution, and</span></div>
<div class="g" style="left:1261px;top:517.2px;height:20px;line-height:20px;font-family:'Liberation Sans';font-size:13.7px;font-weight:400;color:#dce4ee;-webkit-text-stroke:0.15px #dce4ee;"><span style="letter-spacing:0.021px;margin-right:-0.021px">tax haven country.</span></div>
<div class="g" style="left:1059px;top:597.2px;width:800px;height:20px;line-height:20px;text-align:right;font-family:'Liberation Sans';font-size:12px;font-weight:700;color:#dce4ee;-webkit-text-stroke:0.15px #dce4ee;"><span style="letter-spacing:0.073px;margin-right:-0.073px">You:</span></div>
<div class="g" style="left:1059px;top:631.2px;width:800px;height:20px;line-height:20px;text-align:right;font-family:'Liberation Sans';font-size:13.7px;font-weight:400;color:#dce4ee;-webkit-text-stroke:0.15px #dce4ee;"><span style="letter-spacing:-0.006px;margin-right:0.006px">please the check how many records for each country</span></div>
<div class="g" style="left:1254px;top:667.7px;height:20px;line-height:20px;font-family:'Liberation Sans';font-size:12px;font-weight:700;color:#dce4ee;-webkit-text-stroke:0.15px #dce4ee;"><span style="letter-spacing:0.008px;margin-right:-0.008px">AI Assistant:</span></div>
<div class="g" style="left:1261px;top:700.7px;height:20px;line-height:20px;font-family:'Liberation Sans';font-size:13.7px;font-weight:400;color:#dce4ee;-webkit-text-stroke:0.15px #dce4ee;letter-spacing:1.6px">---</div>
<div class="g" style="left:1261px;top:716.9000000000001px;height:20px;line-height:20px;font-family:'Liberation Sans';font-size:13.8px;font-weight:400;color:#dce4ee;-webkit-text-stroke:0.15px #dce4ee;"><span style="letter-spacing:0.010px;margin-right:-0.010px">This function counts the number of transactions for each country in the dataset.</span></div>
<div class="g" style="left:1261px;top:748.8000000000001px;height:20px;line-height:20px;font-family:'Liberation Sans';font-size:13.7px;font-weight:400;color:#dce4ee;-webkit-text-stroke:0.15px #dce4ee;letter-spacing:1.6px">---</div>
<div style="left:1238px;top:85.5px;width:648px;height:778.5px;overflow:hidden;border-radius:8px">
<div style="left:16px;top:741.5px;width:456px;height:60px;background:#1d1e1e;border-radius:6px;"></div>
<div class="g" style="left:23px;top:747.1px;height:20px;line-height:20px;font-family:'Liberation Sans';font-size:14px;font-weight:400;color:#dce4ee;-webkit-text-stroke:0.15px #dce4ee;"><span style="letter-spacing:-0.017px;margin-right:0.017px">def process(dfs):</span></div>
<div class="g" style="left:37px;top:762.7px;height:20px;line-height:20px;font-family:'Liberation Sans';font-size:14px;font-weight:400;color:#dce4ee;-webkit-text-stroke:0.15px #dce4ee;">df = dfs[&quot;df&quot;]</div>
<div style="left:461px;top:747.5px;width:8px;height:40px;background:#696969;border-radius:4px;"></div>
<div style="left:482px;top:741.5px;width:140px;height:27.6px;background:#0614f6;border-radius:6px;"></div>
<div class="g" style="left:152.0px;top:746.5px;width:800px;height:20px;line-height:20px;text-align:center;font-family:'Liberation Sans';font-size:13.5px;font-weight:400;color:#e8ecf2;-webkit-text-stroke:0.15px #e8ecf2;"><span style="letter-spacing:-0.091px;margin-right:0.091px">Apply Sample</span></div>
<div style="left:482px;top:773.5px;width:140px;height:27px;background:#2e8b57;border-radius:6px;"></div>
</div>
<div style="left:1874px;top:582px;width:8px;height:187px;background:#5e5e5e;border-radius:4px;"></div>
<div style="left:1238px;top:880px;width:648px;height:70px;background:#262626;border-radius:6px;"></div>
<div style="left:1238px;top:880px;width:518px;height:70px;background:#1d1e1e;border-radius:6px;"></div>
<div class="g" style="left:1245px;top:898.0px;height:20px;line-height:20px;font-family:'Liberation Sans';font-size:12px;font-weight:400;color:#ffffff;-webkit-text-stroke:0.15px #ffffff;"><span style="letter-spacing:-0.003px;margin-right:0.003px">please sort the data by amount from big to small</span></div>
<div style="left:1501px;top:900px;width:1px;height:15px;background:#ffffff;border-radius:0px;"></div>
<div style="left:1766px;top:901px;width:120px;height:28px;background:#008080;border-radius:6px;"></div>
<div class="g" style="left:1426.0px;top:906.2px;width:800px;height:20px;line-height:20px;text-align:center;font-family:'Liberation Sans';font-size:13.5px;font-weight:400;color:#dce4ee;-webkit-text-stroke:0.15px #dce4ee;"><span style="letter-spacing:-0.377px;margin-right:0.377px">Send</span></div>
</body></html>
